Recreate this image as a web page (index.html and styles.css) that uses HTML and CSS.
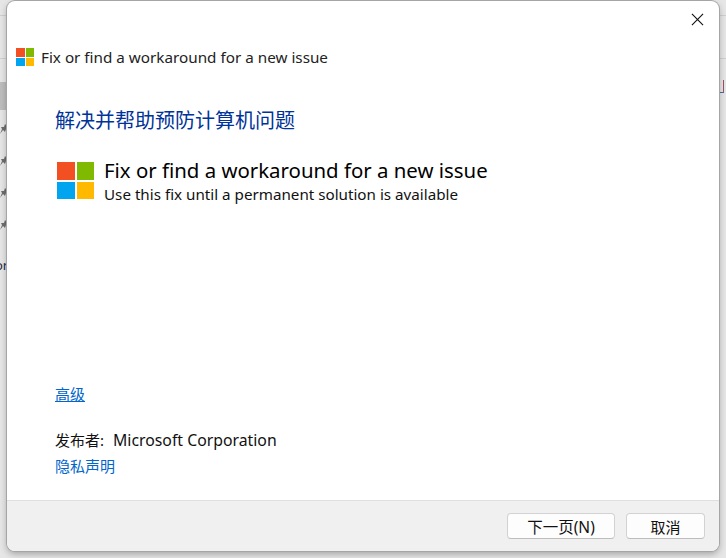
FILE: index.html
```html
<!DOCTYPE html>
<html lang="zh-CN">
<head>
    <meta charset="UTF-8">
    <meta name="viewport" content="width=device-width, initial-scale=1.0">
    <title>Fix or find a workaround for a new issue</title>
    <link rel="stylesheet" href="styles.css">
</head>
<body>
    <div class="desktop">
        <div class="back-line back-line-top"></div>
        <div class="back-line back-line-mid"></div>
        <div class="back-selected"></div>
        <svg class="back-pin pin-1" viewBox="0 0 8 10"><path d="M5 0 8 3 6 5 5 8 3 6 0 10 2 5 1 3 4 3z"/></svg>
        <svg class="back-pin pin-2" viewBox="0 0 8 10"><path d="M5 0 8 3 6 5 5 8 3 6 0 10 2 5 1 3 4 3z"/></svg>
        <svg class="back-pin pin-3" viewBox="0 0 8 10"><path d="M5 0 8 3 6 5 5 8 3 6 0 10 2 5 1 3 4 3z"/></svg>
        <svg class="back-pin pin-4" viewBox="0 0 8 10"><path d="M5 0 8 3 6 5 5 8 3 6 0 10 2 5 1 3 4 3z"/></svg>
        <span class="back-text">or</span>
        <div class="back-mark"></div>

        <div class="dialog">
            <header class="title-row">
                <div class="logo logo-small">
                    <i class="red"></i><i class="green"></i><i class="blue"></i><i class="yellow"></i>
                </div>
                <span class="title">Fix or find a workaround for a new issue</span>
                <svg class="close" viewBox="0 0 14 14"><path d="M1 1 13 13M13 1 1 13"/></svg>
            </header>

            <main class="content">
                <h1 class="heading">解决并帮助预防计算机问题</h1>
                <div class="package">
                    <div class="logo logo-large">
                        <i class="red"></i><i class="green"></i><i class="blue"></i><i class="yellow"></i>
                    </div>
                    <div class="package-text">
                        <div class="package-name">Fix or find a workaround for a new issue</div>
                        <div class="package-desc">Use this fix until a permanent solution is available</div>
                    </div>
                </div>
                <div class="spacer"></div>
                <a class="link advanced" href="#">高级</a>
                <div class="publisher"><span class="publisher-label">发布者:</span>Microsoft Corporation</div>
                <a class="link privacy" href="#">隐私声明</a>
            </main>

            <footer class="footer">
                <button class="btn btn-next">下一页(N)</button>
                <button class="btn btn-cancel">取消</button>
            </footer>
        </div>
    </div>
</body>
</html>
```

FILE: styles.css
```css
* {
    box-sizing: border-box;
}

html, body {
    margin: 0;
    height: 100%;
    overflow: hidden;
}

body {
    font-family: "Noto Sans", "Noto Sans CJK SC", sans-serif;
    color: #111;
}

.desktop {
    position: relative;
    width: 726px;
    height: 558px;
    background: #e6e6e6;
}

/* bits of the window behind the dialog */
.back-line {
    position: absolute;
    left: 0;
    width: 100%;
    height: 1px;
    background: #cfcfcf;
}

.back-line-top {
    top: 15px;
}

.back-line-mid {
    top: 58px;
}

.back-selected {
    position: absolute;
    left: 0;
    top: 82px;
    width: 7px;
    height: 28px;
    background: #bdbdbd;
}

.back-pin {
    position: absolute;
    left: 0;
    width: 8px;
    height: 10px;
    fill: #6e6e6e;
}

.pin-1 { top: 124px; }
.pin-2 { top: 156px; }
.pin-3 { top: 188px; }
.pin-4 { top: 220px; }

.back-text {
    position: absolute;
    left: -5px;
    top: 256px;
    font-size: 13px;
    color: #1a2a44;
}

.back-mark {
    position: absolute;
    left: 719px;
    top: 80px;
    width: 5px;
    height: 13px;
    border-right: 1px solid #a0506a;
    border-bottom: 1px solid #3f6fb0;
}

.dialog {
    position: absolute;
    left: 7px;
    top: 1px;
    width: 712px;
    height: 550px;
    display: flex;
    flex-direction: column;
    background: #fff;
    border-radius: 8px;
    box-shadow: 0 0 0 1px #a5a5a5, 0 3px 7px rgba(0, 0, 0, 0.3);
    overflow: hidden;
}

.title-row {
    position: relative;
    flex: none;
    display: flex;
    align-items: center;
    gap: 7px;
    height: 76px;
    padding: 36px 0 0 9px;
}

.logo {
    display: grid;
    grid-template-columns: 1fr 1fr;
    grid-template-rows: 1fr 1fr;
    flex: none;
}

.logo-small {
    width: 18px;
    height: 18px;
    gap: 1px;
}

.logo-large {
    width: 37px;
    height: 37px;
    gap: 2px;
}

.red { background: #f25022; }
.green { background: #7fba00; }
.blue { background: #00a4ef; }
.yellow { background: #ffb900; }

.title {
    font-size: 15.25px;
    color: #222;
}

.close {
    position: absolute;
    right: 15px;
    top: 12px;
    width: 13px;
    height: 13px;
    fill: none;
    stroke: #111;
    stroke-width: 1.2;
}

.content {
    flex: 1;
    display: flex;
    flex-direction: column;
    align-items: flex-start;
    padding: 29px 0 23px 48px;
}

.heading {
    margin: 0;
    font-size: 20px;
    line-height: 30px;
    font-weight: 400;
    color: #003399;
}

.package {
    display: flex;
    align-items: center;
    gap: 10px;
    margin-top: 21px;
    margin-left: 2px;
}

.package-name {
    font-size: 20.4px;
    line-height: 26px;
    color: #000;
}

.package-desc {
    margin-top: 1px;
    font-size: 15.2px;
    line-height: 20px;
    color: #111;
}

.spacer {
    flex: 1;
}

.link {
    font-size: 15px;
    color: #0066cc;
}

.advanced {
    line-height: 22px;
}

.privacy {
    line-height: 22px;
    text-decoration: none;
}

.publisher {
    margin-top: 24px;
    margin-bottom: 4px;
    font-size: 15.8px;
    line-height: 22px;
}

.publisher-label {
    font-size: 15px;
    margin-right: 9px;
}

.footer {
    flex: none;
    display: flex;
    justify-content: flex-end;
    gap: 11px;
    height: 51px;
    padding: 12px 14px 0 0;
    background: #f0f0f0;
    border-top: 1px solid #dfdfdf;
}

.btn {
    height: 26px;
    padding: 0;
    font-family: inherit;
    font-size: 15px;
    color: #111;
    background: #fdfdfd;
    border: 1px solid #d2d2d2;
    border-bottom-color: #bdbdbd;
    border-radius: 4px;
}

.btn-next {
    width: 108px;
    font-size: 15.5px;
}

.btn-cancel {
    width: 79px;
}
```
